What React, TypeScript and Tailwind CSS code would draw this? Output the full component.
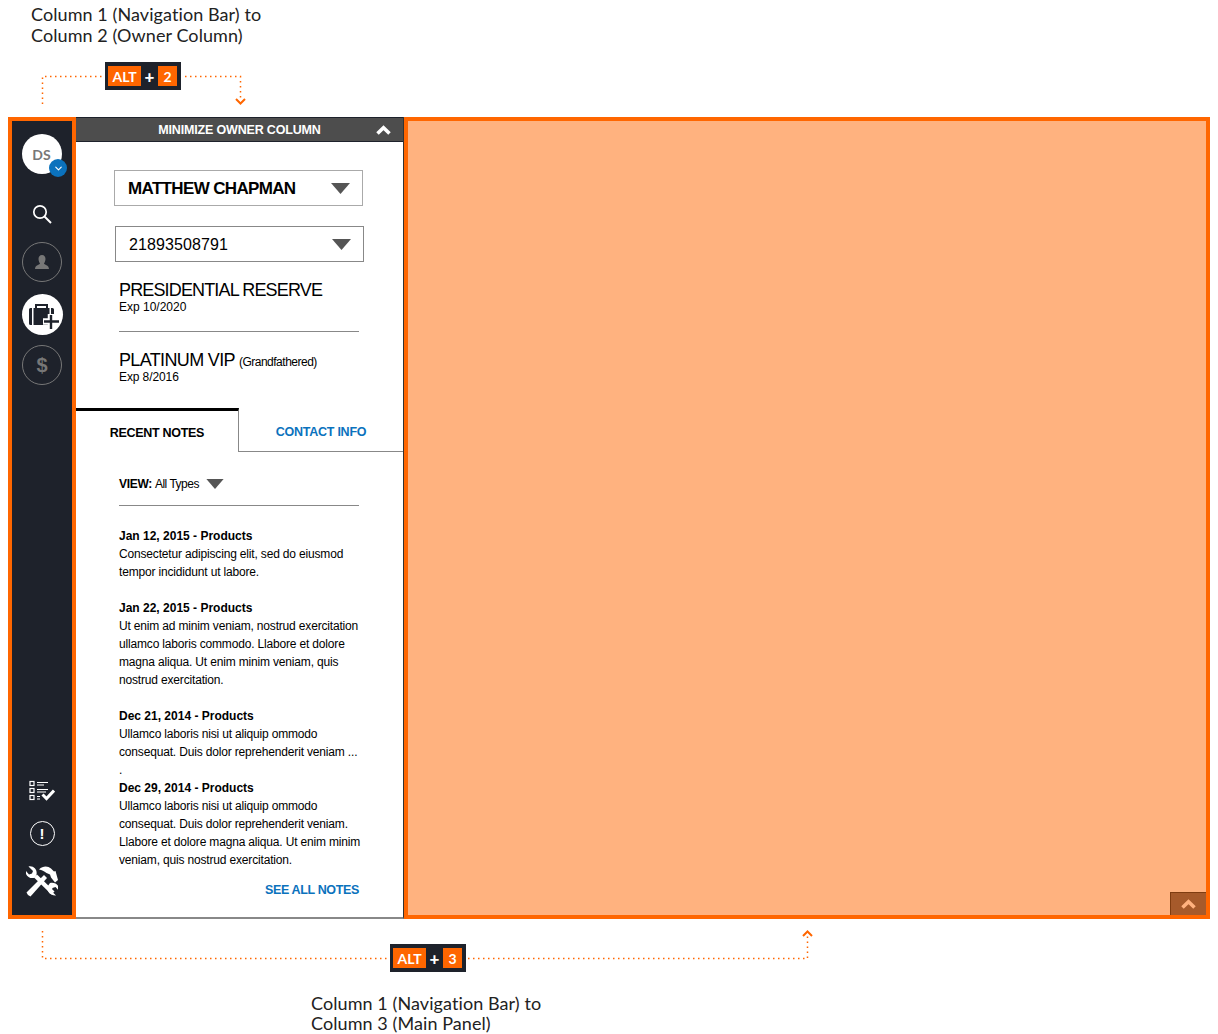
import { ChevronDown } from "lucide-react";

const notes = [
  {
    head: "Jan 12, 2015 - Products",
    lines: ["Consectetur adipiscing elit, sed do eiusmod", "tempor incididunt ut labore."],
  },
  {
    head: "Jan 22, 2015 - Products",
    lines: [
      "Ut enim ad minim veniam, nostrud exercitation",
      "ullamco laboris commodo. Llabore et dolore",
      "magna aliqua. Ut enim minim veniam, quis",
      "nostrud exercitation.",
    ],
  },
  {
    head: "Dec 21, 2014 - Products",
    lines: ["Ullamco laboris nisi ut aliquip ommodo", "consequat. Duis dolor reprehenderit veniam ...", "."],
  },
  {
    head: "Dec 29, 2014 - Products",
    lines: [
      "Ullamco laboris nisi ut aliquip ommodo",
      "consequat. Duis dolor reprehenderit veniam.",
      "Llabore et dolore magna aliqua. Ut enim minim",
      "veniam, quis nostrud exercitation.",
    ],
  },
];

function Caret({ className }: { className: string }) {
  return (
    <svg viewBox="0 0 19 11" className={className}>
      <path d="M0 0h19l-9.500 11z" fill="#555" />
    </svg>
  );
}

function Chevron({ color }: { color: string }) {
  return (
    <svg viewBox="0 0 15 10" className="w-[15px] h-[10px]">
      <path d="M1.500 8.500L7.500 2.800 13.500 8.500" fill="none" stroke={color} strokeWidth="3.600" />
    </svg>
  );
}

function ShortcutBadge({ n }: { n: string }) {
  return (
    <div className="flex items-center w-[76px] h-[28px] bg-[#1e222b] pl-[3px] pr-[4px] text-white font-bold text-[14px] font-['Lato',sans-serif]">
      <span className="w-[33px] h-[20px] bg-[#ff6600] flex items-center justify-center">ALT</span>
      <span className="w-[17px] text-center text-[17px] font-black leading-none">+</span>
      <span className="w-[19px] h-[20px] bg-[#ff6600] flex items-center justify-center">{n}</span>
    </div>
  );
}

function SearchIcon() {
  return (
    <svg viewBox="0 0 20 20" className="w-[20px] h-[20px] mt-[30px]" fill="none" stroke="#fff">
      <circle cx="8" cy="8" r="6.200" strokeWidth="1.700" />
      <path d="M12.500 12.500L19 19" strokeWidth="2" />
    </svg>
  );
}

function BriefcasePlus() {
  return (
    <svg viewBox="0 0 30 26" className="w-[30px] h-[26px] ml-[3px] mt-[2px]">
      <path d="M7 5V2h11v3" fill="none" stroke="#1e222b" strokeWidth="2" />
      <path d="M3 5v17H1.500A1.500 1.500 0 0 1 0 20.500v-14A1.500 1.500 0 0 1 1.500 5z" fill="#1e222b" />
      <rect x="4.500" y="5" width="16" height="17" fill="#1e222b" />
      <path d="M22 5h1.500A1.500 1.500 0 0 1 25 6.500V22h-3z" fill="#1e222b" />
      <path d="M22 11v15M14 18.500h16" stroke="#fff" strokeWidth="6.500" />
      <path d="M22 12v14M15 18.500h15" stroke="#1e222b" strokeWidth="2.400" />
    </svg>
  );
}

function ChecklistIcon() {
  return (
    <svg viewBox="0 0 26 22" className="w-[26px] h-[22px]" fill="none" stroke="#fff">
      <rect x="1" y="1.500" width="4" height="4" strokeWidth="1.200" />
      <rect x="1" y="8.500" width="4" height="4" strokeWidth="1.200" />
      <rect x="1" y="15.500" width="4" height="4" strokeWidth="1.200" />
      <path d="M8 2.500h11M8 5h7M8 9.500h11M8 12h9M8 16.500h3M8 19h3" strokeWidth="1.200" />
      <path d="M13.500 14.500l4 4L25 10.500" strokeWidth="3" />
    </svg>
  );
}

function ToolsIcon() {
  return (
    <svg viewBox="0 0 32 32" className="w-[32px] h-[32px]" fill="#fff">
      <path d="M2 30l-1.500-2.500L18 10l3 3L4.500 31.500z" />
      <path d="M13 4.500C17 .5 22 1 25 3.500l3 3 1.500-.5 2.500 9-3 2.500-4-5-1-3-3.500-1.500C18 6 16 5 13 4.500z" />
      <path d="M8 12.500l3-3 17.500 17-3 3z" />
      <path d="M10.500 9.500C11.500 5 8 .5 2.500 1.500L7 6 6 8.500 3 9.500-.5 5.500C-1 11 4.500 14.500 9 12.500z" />
      <path d="M21.500 21.500c-1 4.500 2.500 9.500 8.500 9l-4.500-4.500 1-3 3-1 3.500 4c1-5.500-4-9.500-9-8z" />
    </svg>
  );
}

export default function App() {
  return (
    <div className="w-[1218px] h-[1034px] bg-white overflow-hidden font-['Liberation_Sans',sans-serif] text-black">
      {/* top annotation */}
      <div className="relative h-[117px]">
        <p className="absolute left-[31px] top-[4px] text-[18px] leading-[21px] tracking-[0.08px] font-['Lato',sans-serif] text-[#222]">
          Column 1 (Navigation Bar) to
          <br />
          Column 2 (Owner Column)
        </p>
        <svg className="absolute left-0 top-0 w-[300px] h-[117px]" fill="none" stroke="#ff6600">
          <path d="M42.500 104V76.500H105M185 76.500H240.500V100" strokeWidth="1.500" strokeDasharray="1.500 3.500" />
          <path d="M236 99l4.500 4.500L245 99" strokeWidth="2" />
        </svg>
        <div className="absolute left-[105px] top-[62px]">
          <ShortcutBadge n="2" />
        </div>
      </div>

      <div className="flex h-[802px] ml-[8px] w-[1202px]">
        {/* nav bar */}
        <div className="w-[68px] shrink-0 border-[4px] border-[#ff6600] bg-[#1e222b] flex flex-col items-center pt-[13px] pb-[18px]">
          <div className="relative w-[40px] h-[40px] rounded-full bg-white flex items-center justify-center pr-[1px] text-[14px] font-bold text-[#777] font-['Lato',sans-serif]">
            DS
            <span className="absolute left-[27px] top-[25px] w-[18px] h-[18px] rounded-full bg-[#0b72bd] flex items-center justify-center">
              <ChevronDown size={11} color="#fff" strokeWidth={2.500} />
            </span>
          </div>
          <SearchIcon />
          <div className="mt-[18px] w-[40px] h-[40px] rounded-full border border-[#777] flex items-center justify-center">
            <svg viewBox="0 0 16 16" className="w-[16px] h-[16px]" fill="#777">
              <path d="M8 1c2.300 0 3.500 1.700 3.500 4S10.200 9 10 9.500c0 1.200 5 1.500 5 5.500H1c0-4 5-4.300 5-5.500C5.800 9 4.500 7.300 4.500 5S5.700 1 8 1z" />
            </svg>
          </div>
          <div className="mt-[12px] w-[41px] h-[41px] rounded-full bg-white flex items-center justify-center">
            <BriefcasePlus />
          </div>
          <div className="mt-[10px] w-[40px] h-[40px] rounded-full border border-[#777] flex items-center justify-center text-[#777] font-bold text-[20px]">
            $
          </div>
          <div className="mt-auto">
            <ChecklistIcon />
          </div>
          <div className="mt-[19px] w-[25px] h-[25px] rounded-full border-[1.5px] border-white flex items-center justify-center text-white font-bold text-[15px] leading-none">
            !
          </div>
          <div className="mt-[19px]">
            <ToolsIcon />
          </div>
        </div>

        {/* owner column */}
        <div className="w-[328px] shrink-0 border-r border-[#333] border-b-2 border-b-[#888] flex flex-col">
          <div className="relative h-[25px] pt-[1px] bg-[#4d4d4d] border-t border-t-[#1e222b] border-b border-b-[#1e222b] flex items-center justify-center text-white font-bold text-[12.500px] tracking-[-0.17px]">
            MINIMIZE OWNER COLUMN
            <span className="absolute right-[12px] top-[7px]">
              <Chevron color="#fff" />
            </span>
          </div>

          <div className="ml-[38px] mt-[28px] w-[249px] h-[36px] border border-[#aaa] flex items-center justify-between pl-[13px] pr-[12px]">
            <span className="pt-[1px] font-bold text-[17px] tracking-[-0.65px]">MATTHEW CHAPMAN</span>
            <Caret className="w-[19px] h-[11px]" />
          </div>
          <div className="ml-[39px] mt-[20px] w-[249px] h-[36px] border border-[#888] flex items-center justify-between pl-[13px] pr-[12px]">
            <span className="pt-[1px] text-[16px] tracking-[0.1px]">21893508791</span>
            <Caret className="w-[19px] h-[11px]" />
          </div>

          <div className="ml-[43px] mt-[17px] w-[240px]">
            <p className="text-[18px] leading-[22px] tracking-[-0.85px]">PRESIDENTIAL RESERVE</p>
            <p className="text-[12px] leading-[12px] tracking-[0px]">Exp 10/2020</p>
            <div className="mt-[18px] border-t border-[#888]" />
            <p className="mt-[18px] text-[18px] leading-[20px] tracking-[-0.65px]">
              PLATINUM VIP{" "}
              <span className="text-[12px] leading-none tracking-[-0.5px]">(Grandfathered)</span>
            </p>
            <p className="text-[12px] leading-[14px] tracking-[-0.1px]">Exp 8/2016</p>
          </div>

          <div className="mt-[24px] flex h-[44px] text-[12.500px] font-bold">
            <div className="w-[163px] border-t-[3px] border-t-black border-r border-r-[#888] flex items-center justify-center pt-[3px] tracking-[-0.3px]">
              RECENT NOTES
            </div>
            <div className="flex-1 border-b border-[#888] flex items-center justify-center pt-[6px] text-[#0b72bd] tracking-[-0.25px]">
              CONTACT INFO
            </div>
          </div>

          <div className="ml-[43px] w-[240px] flex-1 flex flex-col">
            <div className="mt-[23px] h-[31px] flex items-start border-b border-[#888] text-[12px] leading-[18px] tracking-[-0.3px]">
              <b>VIEW:</b>
              <span className="ml-[3px] tracking-[-0.5px]">All Types</span>
              <Caret className="ml-[7px] mt-[4px] w-[18px] h-[10px]" />
            </div>
            <div className="mt-[21px] flex flex-col gap-[18px] text-[12px] leading-[18px] tracking-[-0.17px] whitespace-nowrap">
              {notes.map((n, i) => (
                <div key={n.head} className={i === 3 ? "mt-[-18px]" : ""}>
                  <p className="font-bold tracking-[0px]">{n.head}</p>
                  {n.lines.map((l) => (
                    <p key={l}>{l}</p>
                  ))}
                </div>
              ))}
            </div>
            <p className="mt-[12px] text-right font-bold text-[12.500px] leading-[18px] text-[#0b72bd] tracking-[-0.35px]">
              SEE ALL NOTES
            </p>
          </div>
        </div>

        {/* main panel */}
        <div className="relative flex-1 border-[4px] border-[#ff6600] bg-[#ffb27f]">
          <div className="absolute right-0 bottom-0 w-[36px] h-[23px] bg-[#a65a2b] border-t border-l border-[#7f3c10] flex items-center justify-center">
            <Chevron color="#ffb27f" />
          </div>
        </div>
      </div>

      {/* bottom annotation */}
      <div className="relative h-[115px]">
        <svg className="absolute left-0 top-0 w-[830px] h-[60px]" fill="none" stroke="#ff6600">
          <path d="M42.500 12V39.500H390M468 39.500H807.500V17" strokeWidth="1.500" strokeDasharray="1.500 3.500" />
          <path d="M803 17l4.500-4.500L812 17" strokeWidth="2" />
        </svg>
        <div className="absolute left-[390px] top-[25px]">
          <ShortcutBadge n="3" />
        </div>
        <p className="absolute left-[311px] top-[74px] text-[18px] leading-[20px] tracking-[0.08px] font-['Lato',sans-serif] text-[#222]">
          Column 1 (Navigation Bar) to
          <br />
          Column 3 (Main Panel)
        </p>
      </div>
    </div>
  );
}
